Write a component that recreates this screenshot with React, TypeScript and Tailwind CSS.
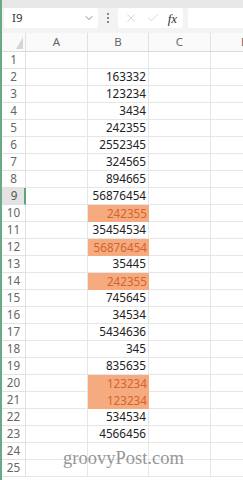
import React from "react";
import { ChevronDown, X, Check } from "lucide-react";

const rows: { n: number; v: string; hl?: boolean }[] = [
  { n: 1, v: "" },
  { n: 2, v: "163332" },
  { n: 3, v: "123234" },
  { n: 4, v: "3434" },
  { n: 5, v: "242355" },
  { n: 6, v: "2552345" },
  { n: 7, v: "324565" },
  { n: 8, v: "894665" },
  { n: 9, v: "56876454" },
  { n: 10, v: "242355", hl: true },
  { n: 11, v: "35454534" },
  { n: 12, v: "56876454", hl: true },
  { n: 13, v: "35445" },
  { n: 14, v: "242355", hl: true },
  { n: 15, v: "745645" },
  { n: 16, v: "34534" },
  { n: 17, v: "5434636" },
  { n: 18, v: "345" },
  { n: 19, v: "835635" },
  { n: 20, v: "123234", hl: true },
  { n: 21, v: "123234", hl: true },
  { n: 22, v: "534534" },
  { n: 23, v: "4566456" },
  { n: 24, v: "" },
  { n: 25, v: "" },
];

export default function App() {
  return (
    <div
      className="relative flex w-[243px] h-[480px] overflow-hidden bg-white"
      style={{ fontFamily: '"Noto Sans", "Open Sans", sans-serif' }}
    >
      <div className="w-[2px] shrink-0 bg-[#6aa886]" />
      <div className="flex flex-1 flex-col min-w-0">
        {/* top strip */}
        <div className="h-[8px] shrink-0 bg-[#e7e7e7]" />
        {/* formula bar */}
        <div className="flex h-[20px] shrink-0 items-stretch bg-[#f3f3f3] pl-[2px]">
          <div className="flex w-[94px] items-center justify-between rounded-[3px] bg-white pl-[8px] pr-[3px]">
            <span className="text-[11.5px] leading-none text-[#333]">I9</span>
            <ChevronDown size={12} strokeWidth={1.5} className="text-[#666]" />
          </div>
          <div className="flex w-[20px] flex-col items-center justify-center gap-[2px]">
            <span className="h-[2px] w-[2px] rounded-full bg-[#666]" />
            <span className="h-[2px] w-[2px] rounded-full bg-[#666]" />
            <span className="h-[2px] w-[2px] rounded-full bg-[#666]" />
          </div>
          <div className="flex w-[65px] items-center justify-around rounded-[3px] bg-white px-[2px]">
            <X size={14} strokeWidth={1.2} className="text-[#c8c8c8]" />
            <Check size={14} strokeWidth={1.2} className="text-[#c8c8c8]" />
            <span
              className="text-[13px] italic leading-none text-[#333]"
              style={{ fontFamily: '"Liberation Serif", serif' }}
            >
              fx
            </span>
          </div>
          <div className="ml-[5px] flex-1 rounded-l-[3px] bg-white" />
        </div>
        <div className="h-[5px] shrink-0 bg-[#f3f3f3]" />
        {/* column headers */}
        <div className="flex h-[19px] shrink-0 border-b border-[#dadada] bg-[#fafafa] text-[11.5px] text-[#666]">
          <div className="relative w-[24px] shrink-0 border-r border-[#e2e2e2]">
            <div className="absolute bottom-[2px] right-[2px] h-0 w-0 border-b-[12px] border-l-[7px] border-b-[#d6d6d6] border-l-transparent" />
          </div>
          <div className="flex w-[62px] shrink-0 items-center justify-center border-r border-[#e2e2e2]">A</div>
          <div className="flex w-[61px] shrink-0 items-center justify-center border-r border-[#e2e2e2]">B</div>
          <div className="flex w-[62px] shrink-0 items-center justify-center border-r border-[#e2e2e2]">C</div>
          <div className="flex flex-1 items-center justify-start pl-[30px]">D</div>
        </div>
        {/* rows */}
        {rows.map((r) => (
          <div key={r.n} className="flex h-[17px] shrink-0 text-[11.7px] leading-none">
            <div
              className={
                r.n === 9
                  ? "flex w-[24px] shrink-0 items-center justify-center border-b border-b-[#e2e2e2] border-r-2 border-r-[#5fa37c] bg-[#e3e3e3] pl-[2px] text-[#555]"
                  : "flex w-[24px] shrink-0 items-center justify-center border-b border-r border-[#e2e2e2] bg-white text-[#666]"
              }
            >
              {r.n}
            </div>
            <div className="w-[62px] shrink-0 border-b border-r border-[#e6e6e6]" />
            <div
              className={
                r.hl
                  ? "flex w-[61px] shrink-0 items-center justify-end bg-[#f6aa7f] pr-[2px] text-[#d4642a]"
                  : "flex w-[61px] shrink-0 items-center justify-end border-b border-r border-[#e6e6e6] pr-[2px] text-[#222]"
              }
            >
              {r.v}
            </div>
            <div className="w-[62px] shrink-0 border-b border-r border-[#e6e6e6]" />
            <div className="flex-1 border-b border-[#e6e6e6]" />
          </div>
        ))}
      </div>
      <div
        className="pointer-events-none absolute left-[63px] top-[449px] text-[18.5px] leading-none text-[#8c8c8c] opacity-90"
        style={{ fontFamily: '"Liberation Serif", serif' }}
      >
        groovyPost.com
      </div>
    </div>
  );
}
